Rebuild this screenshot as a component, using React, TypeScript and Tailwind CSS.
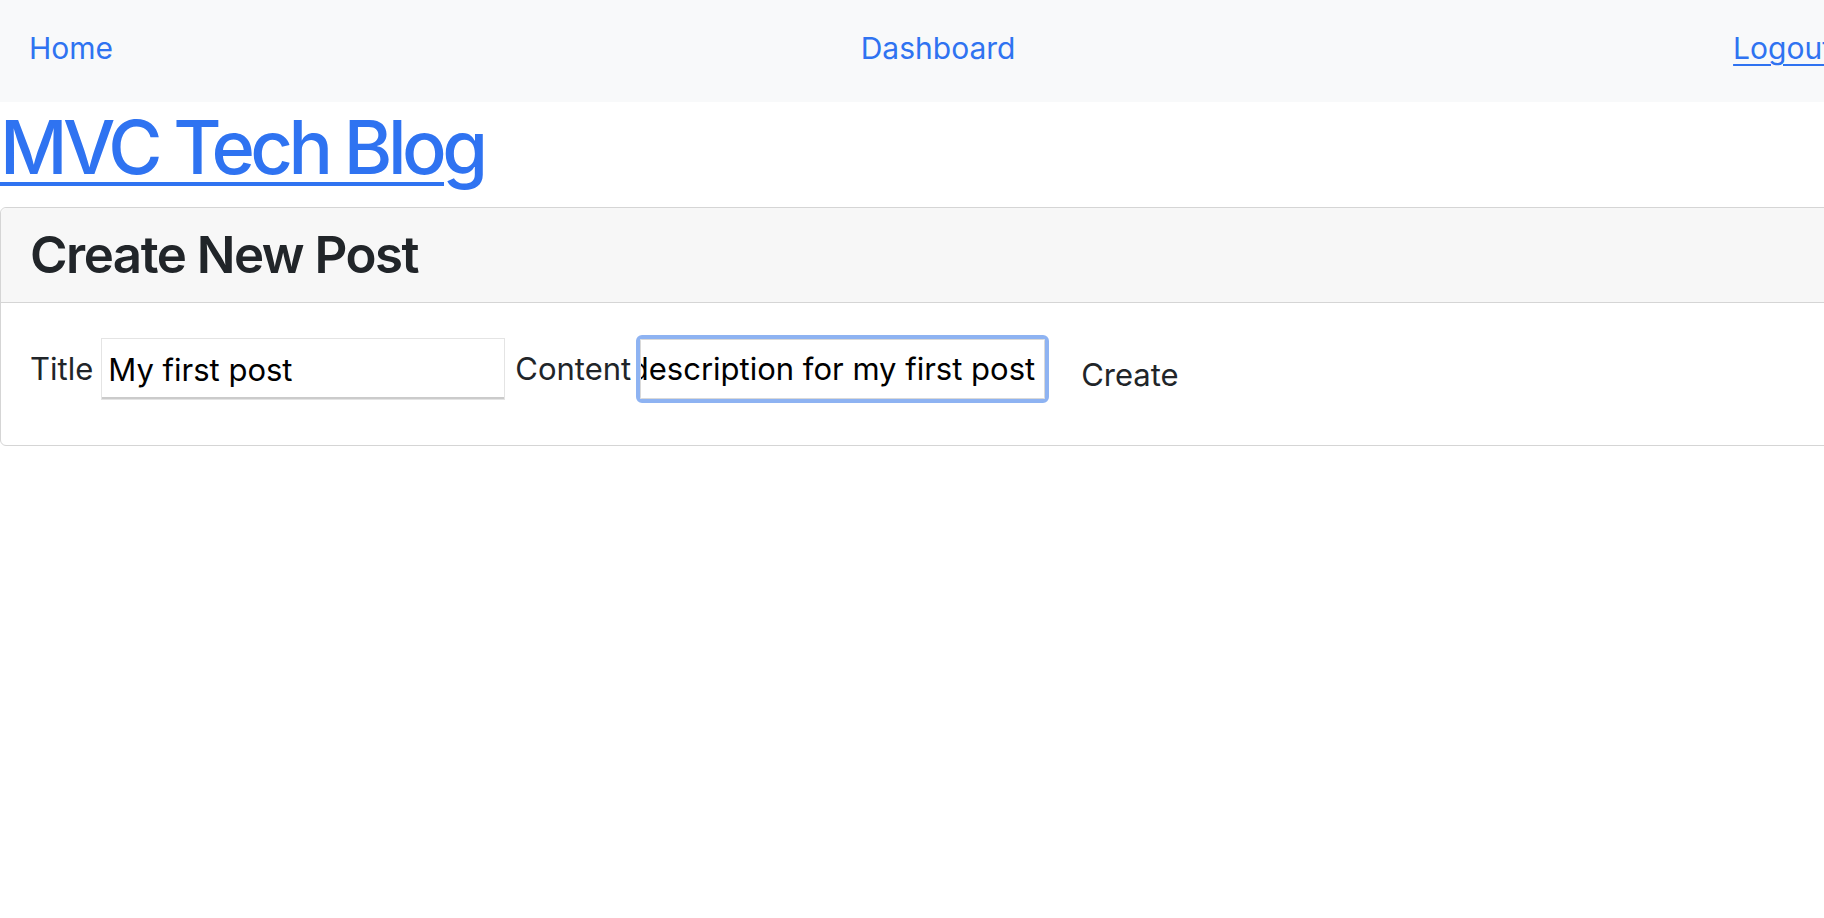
import React from 'react';

const font = { fontFamily: 'Inter, "Noto Sans", sans-serif' };

function NavBar() {
  return (
    <nav className="h-[102px] bg-[#f8f9fa] overflow-hidden">
      <div className="w-[1861px] h-full flex items-center justify-between px-[29px] pb-[5px] text-[30px] text-[#2f73f1]">
        <a href="#" className="no-underline">Home</a>
        <a href="#" className="no-underline ml-[30px]">Dashboard</a>
        <a href="#" className="underline underline-offset-[5px] decoration-[2px]">Logout</a>
      </div>
    </nav>
  );
}

function NewPostCard() {
  return (
    <div className="border border-[#d5d5d5] rounded-[6px] mr-[-8px]">
      <div className="bg-[#f7f7f7] border-b border-[#d5d5d5] h-[95px] flex items-center px-[29px] rounded-t-[6px]">
        <h3 className="text-[51px] font-semibold text-[#212529] tracking-[-1.5px]">Create New Post</h3>
      </div>
      <form className="h-[142px] flex items-center px-[29px] pb-[10px] text-[31px] text-[#212529]" onSubmit={(e) => e.preventDefault()}>
        <label className="mr-[8px]">Title</label>
        <input
          defaultValue="My first post"
          className="w-[404px] h-[62px] bg-white border border-[#e4e4e4] shadow-[inset_0_-2px_0_#cbcbcb] px-[6px] text-[31px] text-black outline-none"
        />
        <label className="ml-[10px] mr-[5px]">Content</label>
        <div className="w-[413px] h-[68px] rounded-[6px] border-[4px] border-[#8eb3f2] overflow-hidden">
          <div className="h-full bg-white border border-[#d9d9d9] flex items-center justify-end overflow-hidden whitespace-nowrap text-black pr-[8px]">
            <span>A description for my first post</span>
            <span className="inline-block w-[2px] h-[34px] bg-black ml-[1px]" />
          </div>
        </div>
        <button type="submit" className="ml-[26px] mt-[12px] px-[6px] text-[31px] text-[#212529]">Create</button>
      </form>
    </div>
  );
}

export default function App() {
  return (
    <div className="min-h-[918px] bg-white overflow-hidden" style={font}>
      <NavBar />
      <h1 className="text-[74px] leading-[90px] font-medium text-[#2f73f1] tracking-[-4.5px] mb-[15px]">
        <a href="#" className="underline decoration-[4px] underline-offset-[8px]">MVC Tech Blog</a>
      </h1>
      <NewPostCard />
    </div>
  );
}
